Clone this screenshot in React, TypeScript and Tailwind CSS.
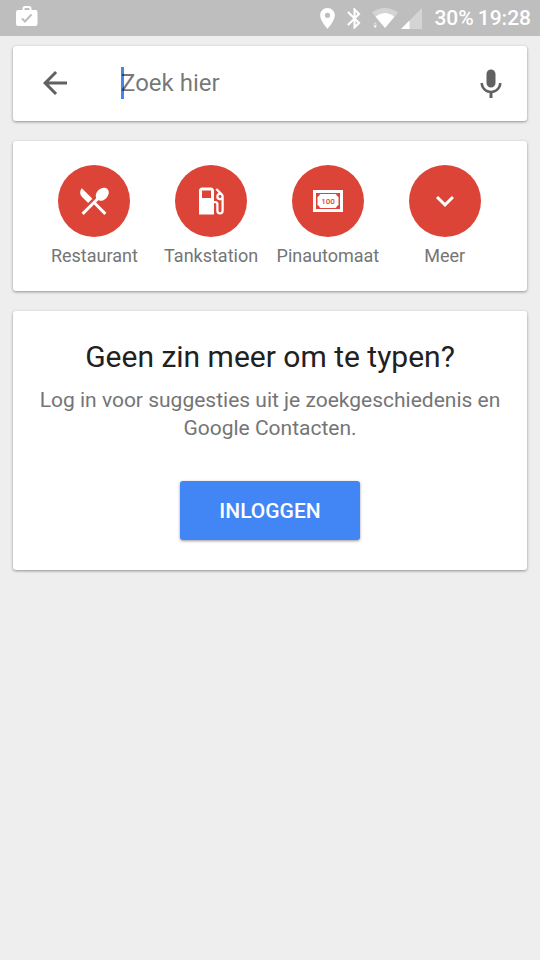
import type { ReactNode } from "react";

// White rounded panel used for every block on the page
function Card({ children, className = "" }: { children: ReactNode; className?: string }) {
  return (
    <section className={`rounded-[3px] bg-white shadow-[0_1px_3px_rgba(0,0,0,0.4)] ${className}`}>
      {children}
    </section>
  );
}

// Red round shortcut with a label below
function Shortcut({ label, children }: { label: string; children: ReactNode }) {
  return (
    <button type="button" className="flex flex-col items-center gap-[7px]">
      <span className="flex size-18 items-center justify-center rounded-full bg-[#db4437] text-white">
        {children}
      </span>
      <span className="text-lg leading-6 whitespace-nowrap text-[#757575]">{label}</span>
    </button>
  );
}

function Icon({ d, viewBox = "0 0 24 24" }: { d: string; viewBox?: string }) {
  return (
    <svg className="size-9" viewBox={viewBox} fill="currentColor" aria-hidden="true">
      <path d={d} />
    </svg>
  );
}

function StatusBar() {
  return (
    <header className="flex h-9 items-center bg-[#bebebe] pr-[9px] pl-4 text-white">
      <svg className="mb-1 h-5 w-[22px]" viewBox="0 0 22 20" aria-hidden="true">
        <path
          fill="currentColor"
          fillRule="evenodd"
          d="M6.500 4V2.500Q6.500 0 9 0H13Q15.500 0 15.500 2.500V4H20Q21.500 4 21.500 6V18Q21.500 20 19.500 20H2Q0 20 0 18V6Q0 4 2 4ZM8.500 4H13.500V2.800Q13.500 2 12.700 2H9.300Q8.500 2 8.500 2.800Z"
        />
        <path d="M6 12.500L9 15.500L15.500 8.500" fill="none" stroke="#bebebe" strokeWidth="2" />
      </svg>

      <div className="ml-auto flex items-center">
        <svg className="mr-3 h-[21px] w-[15px]" viewBox="5 2 14 20" fill="currentColor" aria-hidden="true">
          <path d="M12 2C8.130 2 5 5.130 5 9c0 5.250 7 13 7 13s7-7.750 7-13c0-3.870-3.130-7-7-7zm0 9.500a2.500 2.500 0 0 1 0-5 2.500 2.500 0 0 1 0 5z" />
        </svg>
        <svg className="mr-[11px] h-[21px] w-[14px]" viewBox="5 2 13 20" fill="currentColor" aria-hidden="true">
          <path d="M17.710 7.710L12 2h-1v7.590L6.410 5 5 6.410 10.590 12 5 17.590 6.410 19 11 14.410V22h1l5.710-5.710-4.300-4.290 4.300-4.290zM13 5.830l1.880 1.880L13 9.590V5.830zm1.880 10.460L13 18.170v-3.760l1.880 1.880z" />
        </svg>
        <svg className="mr-[3px] h-5 w-[26px]" viewBox="0 0 26 20" fill="currentColor" aria-hidden="true">
          <path fillOpacity="0.350" d="M0 4.500Q6 0 13 0T26 4.500L22.500 8.700Q18 5 13 5T3.500 8.700Z" />
          <path d="M3.500 8.700Q8 5 13 5T22.500 8.700L13 20Z" />
          <path fillOpacity="0.500" d="M1.500 16.500L3.250 14L5 16.500Z" />
          <path d="M1.500 17.500H5L3.250 20Z" />
        </svg>
        <svg className="mr-3 h-[21px] w-[21px]" viewBox="0 0 21 21" fill="currentColor" aria-hidden="true">
          <path fillOpacity="0.350" d="M21 0V21H0Z" />
          <path d="M8.500 12.500V21H0Z" />
        </svg>
        <div className="flex gap-1 text-[21px] leading-6 font-medium">
          <span>30%</span>
          <span>19:28</span>
        </div>
      </div>
    </header>
  );
}

export default function App() {
  return (
    <div className="min-h-screen bg-[#eeeeee] font-[Roboto,sans-serif]">
      <StatusBar />

      <main className="flex flex-col gap-5 px-[13px] pt-[10px]">
        {/* Search bar */}
        <Card className="flex h-[75px] items-center px-6 pb-px">
          <button type="button" aria-label="Terug" className="text-[#616161]">
            <Icon d="M20 11H7.830l5.590-5.590L12 4l-8 8 8 8 1.410-1.410L7.830 13H20v-2z" />
          </button>
          <div className="relative ml-12 flex-1">
            <span className="absolute inset-y-0 left-0 w-[3px] bg-[#4285f4]" />
            <input
              type="text"
              aria-label="Zoek hier"
              placeholder="Zoek hier"
              className="relative block h-8 w-full bg-transparent text-2xl outline-none placeholder:text-black/55"
            />
          </div>
          <button type="button" aria-label="Spraak" className="-mr-1.5 text-[#616161]">
            <Icon
              viewBox="0 -1 24 24"
              d="M12 14c1.660 0 3-1.340 3-3V5c0-1.660-1.340-3-3-3S9 3.340 9 5v6c0 1.660 1.340 3 3 3zm5.300-3c0 3-2.540 5.100-5.300 5.100S6.700 14 6.700 11H5c0 3.410 2.720 6.230 6 6.720V21h2v-3.280c3.280-.480 6-3.300 6-6.720h-1.700z"
            />
          </button>
        </Card>

        {/* Category shortcuts */}
        <Card className="grid grid-cols-4 pt-6 pr-6 pb-[23px] pl-[23px]">
          <Shortcut label="Restaurant">
            <Icon d="M8.100 13.340l2.830-2.830L3.910 3.500a4.008 4.008 0 0 0 0 5.660l4.190 4.180zm6.780-1.810c1.530.710 3.680.210 5.270-1.380 1.910-1.910 2.280-4.650.810-6.120-1.460-1.460-4.200-1.100-6.120.810-1.590 1.590-2.090 3.740-1.380 5.270L3.700 19.870l1.410 1.410L12 14.410l6.880 6.880 1.410-1.410L13.410 13l1.470-1.470z" />
          </Shortcut>
          <Shortcut label="Tankstation">
            <Icon d="M19.770 7.230l.010-.010-3.720-3.720L15 4.560l2.110 2.110c-.940.360-1.610 1.260-1.610 2.330a2.500 2.500 0 0 0 2.500 2.500c.360 0 .690-.080 1-.210v7.210c0 .550-.450 1-1 1s-1-.450-1-1V14c0-1.100-.900-2-2-2h-1V5c0-1.100-.900-2-2-2H6c-1.100 0-2 .900-2 2v16h10v-7.500h1.500v5a2.500 2.500 0 0 0 5 0V9c0-.690-.280-1.320-.730-1.770zM12 10H6V5h6v5zm6 0c-.550 0-1-.450-1-1s.450-1 1-1 1 .450 1 1-.450 1-1 1z" />
          </Shortcut>
          <Shortcut label="Pinautomaat">
            <svg className="h-[22px] w-[30px]" viewBox="0 0 30 22" aria-hidden="true">
              <path
                fill="currentColor"
                fillRule="evenodd"
                d="M0 0H30V22H0ZM3 3V19H27V3ZM7 4H23Q23.500 6 25.500 7V15Q23.500 16 23 18H7Q6.500 16 4.500 15V7Q6.500 6 7 4Z"
              />
              <text x="15" y="14" textAnchor="middle" fontSize="8" fontWeight="500" fill="#db4437">
                100
              </text>
            </svg>
          </Shortcut>
          <Shortcut label="Meer">
            <Icon d="M16.590 8.590L12 13.170 7.410 8.590 6 10l6 6 6-6z" />
          </Shortcut>
        </Card>

        {/* Sign in prompt */}
        <Card className="flex flex-col items-center px-6 pt-7 pb-[30px] text-center">
          <h1 className="text-[30px] leading-9 text-[#212121]">Geen zin meer om te typen?</h1>
          <p className="mt-[11px] text-[21px] leading-7 text-[#757575]">
            Log in voor suggesties uit je zoekgeschiedenis en Google Contacten.
          </p>
          <button
            type="button"
            className="mt-[39px] h-[59px] w-[180px] rounded-[3px] bg-[#4285f4] pt-0.5 text-[21px] font-medium text-white shadow-[0_1px_3px_rgba(0,0,0,0.4)]"
          >
            INLOGGEN
          </button>
        </Card>
      </main>
    </div>
  );
}
